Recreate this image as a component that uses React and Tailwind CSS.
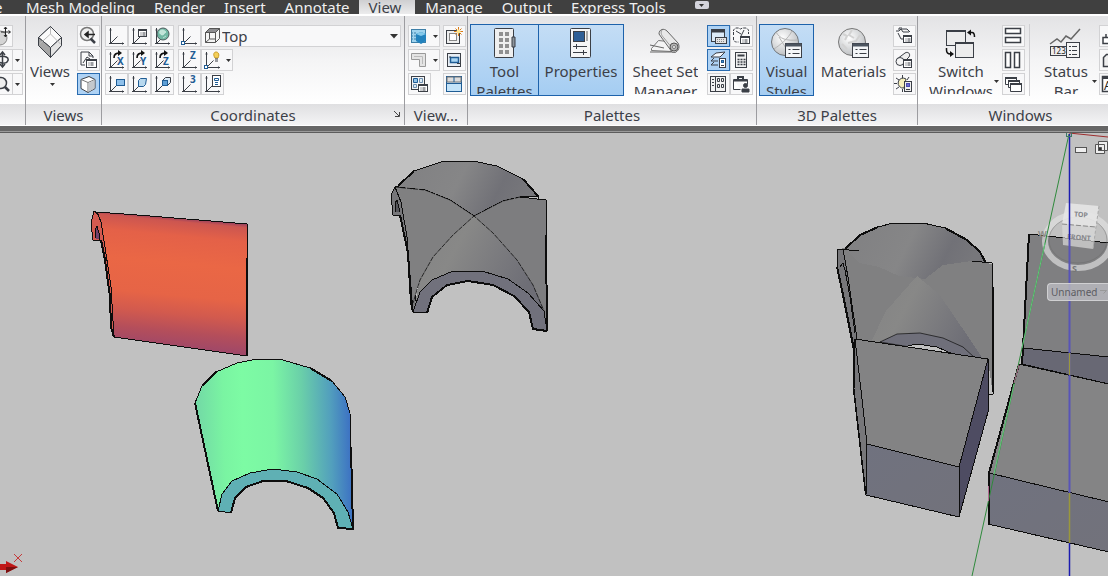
import React, { useState } from 'react';
import clsx from 'clsx';

const tabs = ['Mesh Modeling', 'Render', 'Insert', 'Annotate', 'View', 'Manage', 'Output', 'Express Tools'];

const INK = '#3b3f46';
const BLUE = '#1f5c94';

/* ---------- small icons (20 x 20) ---------- */

const Icon = ({ children }) => (
  <svg width="20" height="20" viewBox="0 0 20 20" fill="none" stroke={INK} className="shrink-0" aria-hidden="true">
    {children}
  </svg>
);

const Axis = ({ children }) => (
  <Icon>
    <path d="M4.500 2v15.500M3 17.500h15M4.500 17.500l7-7" />
    <path d="M3.500 4h2M16.500 16.500v2" />
    {children}
  </Icon>
);

const CurvedArrow = () => (
  <>
    <path d="M8 8c0-4 2-5 6-5" stroke="#111" strokeWidth="1.6" />
    <path d="M12 0l4 3-4 3z" fill="#111" stroke="none" />
  </>
);

const Letter = ({ x = 11, y = 15, children }) => (
  <text x={x} y={y} fontSize="10" fontWeight="bold" fill={BLUE} stroke="none">{children}</text>
);

const MiniList = ({ x, y, w = 9, h = 7 }) => (
  <g>
    <rect x={x} y={y} width={w} height={h} fill="#fff" />
    <path d={`M${x} ${y + 1}h${w}M${x + 2} ${y + 3.5}h1M${x + 4} ${y + 3.5}h3M${x + 2} ${y + 5.500}h1M${x + 4} ${y + 5.500}h3`} />
  </g>
);

const icons = {
  previous: (
    <Icon>
      <circle cx="9" cy="8" r="6.500" fill="#f0f0f0" stroke="#777" strokeWidth="1.500" />
      <path d="M12.500 12.500l4.500 4.500" strokeWidth="2.500" />
      <path d="M17 8.500h-7M10 6l-3 2.500L10 11z" fill="#222" stroke="#222" strokeWidth="1.500" />
    </Icon>
  ),
  named: (
    <Icon>
      <path d="M7 15H3V2h8l4 4v2M11 2v4h4M5 13l4-6 3 2" />
      <MiniList x={8.500} y={9.500} w={10} h={8} />
    </Icon>
  ),
  cube: (
    <Icon>
      <path d="M3 5.500l8-3 6 3v9l-7 4-7-4z" fill="#fff" />
      <path d="M3 5.500l7 3 7-3M10 8.500v10" stroke="#777" />
      <path d="M10.500 9l6-3v8.500l-6 3.500z" fill="#c4c8cc" stroke="none" />
    </Icon>
  ),
  ucs: <Axis />,
  ucsList: <Axis><MiniList x={9.500} y={3.500} w={8} h={7} /></Axis>,
  world: (
    <Axis>
      <circle cx="11" cy="8" r="6" fill="#72b8a4" stroke="#4c5a5c" />
      <path d="M8 5c2-2 4-1 6 1-2 1-2 3-4 3-2-1-3-2-2-4M11 12l3-2" fill="#c0e4d8" stroke="#d8f0e8" strokeWidth=".7" />
    </Axis>
  ),
  origin: <Axis><rect x="2.500" y="15.500" width="3" height="3" fill="#fff" stroke={BLUE} /></Axis>,
  rotX: <Axis><CurvedArrow /><Letter>X</Letter></Axis>,
  rotY: <Axis><CurvedArrow /><Letter>Y</Letter></Axis>,
  rotZ: <Axis><CurvedArrow /><Letter>Z</Letter></Axis>,
  zAxis: <Axis><Letter x={11} y={9}>Z</Letter></Axis>,
  three: <Axis><Letter x={11} y={9}>3</Letter></Axis>,
  view: <Axis><rect x="10.500" y="5.500" width="8" height="6" fill="#8fc0ea" stroke={BLUE} /></Axis>,
  object: <Axis><path d="M9.500 6.500l2-2h6l-1 6-2 2h-5z" fill="#b8d8ee" stroke={BLUE} /></Axis>,
  face: (
    <Axis>
      <path d="M10.500 6.500l3-3h5v5l-3 3h-5z" fill="#d8eaf8" />
      <rect x="10.500" y="6.500" width="5" height="5" fill="#5c9ed6" stroke={BLUE} />
    </Axis>
  ),
  bulb: (
    <Axis>
      <rect x="2.500" y="15.500" width="3" height="3" fill="#fff" stroke={BLUE} />
      <path d="M13 8c-5-8 7-8 3 0z" fill="#f4cf58" stroke="#c89b28" />
      <path d="M13 9h3M13 11h3" />
    </Axis>
  ),
  ucsProps: (
    <Axis>
      <rect x="10.500" y="1.500" width="8" height="11" fill="#fff" />
      <path d="M12.500 4.500h4v2h-4zM13 8.500h3M13 10.500h3" stroke={BLUE} />
    </Axis>
  ),
  newView: (
    <Icon>
      <rect x="2.500" y="4.500" width="13" height="13" fill="#eee" />
      <rect x="5.500" y="7.500" width="7" height="7" fill="#fff" stroke="#888" />
      <path d="M14.500 1v9M10 5.500h9M11.500 2.500l6 6M17.500 2.500l-6 6" stroke="#d97a16" />
      <circle cx="14.500" cy="5.500" r="2" fill="#ffe58a" stroke="none" />
    </Icon>
  ),
  viewports: (
    <Icon>
      <rect x="2.500" y="3.500" width="14" height="13" fill="#9fd3ee" stroke="#3d7fa8" />
      <path d="M2 7h5M2 10h5M2 13h5" stroke="#3d7fa8" strokeDasharray="2 1" />
      <path d="M7 8l5-2 5 2v7l-5 3-5-3z" fill="#2382bd" stroke="none" />
      <path d="M7 8l5 2 5-2-5-2z" fill="#84c9ea" stroke="none" />
    </Icon>
  ),
  polygon: (
    <Icon>
      <path d="M2.500 3.500h14v13h-6v-7h-8z" fill="#e4e4e4" stroke="#999" />
      <path d="M5 6.500h8.500V14" stroke="#bbb" />
    </Icon>
  ),
  clip: (
    <Icon>
      <rect x="3.500" y="3.500" width="13" height="13" fill="#e8eef4" />
      <rect x="6.500" y="7.500" width="8" height="5" fill="#a8d4f2" stroke={BLUE} strokeWidth="1.500" />
      <path d="M5 7h2M13 13.500h3" />
    </Icon>
  ),
  vpNamed: (
    <Icon>
      <rect x="2.500" y="2.500" width="13" height="13" fill="#f3f3f3" />
      <path d="M4.500 4.500h4v4h-4z" fill="#8fc3e8" stroke={BLUE} />
      <path d="M10.500 4.500h3v4h-3zM4.500 10.500h3v3h-3z" fill="#dcebf6" stroke="#6d8fae" />
      <MiniList x={9.500} y={10.500} w={9} h={7} />
    </Icon>
  ),
  join: (
    <Icon>
      <rect x="2.500" y="2.500" width="15" height="15" fill="#c4e3f8" stroke={BLUE} />
      <path d="M3 3h14v5H3z" fill="#ddd" stroke="#777" />
      <path d="M10 3v5M2 9.500h16" stroke={BLUE} />
    </Icon>
  ),
  command: (
    <Icon>
      <rect x="3.500" y="3.500" width="13" height="12" fill="#dcebf8" />
      <path d="M3 5h14" strokeWidth="3" />
      <rect x="7.500" y="11.500" width="11" height="6" fill="#e4e4e4" />
      <path d="M9 13.500h8M9 15.500h8" stroke="#888" strokeDasharray="1 1" />
    </Icon>
  ),
  markup: (
    <Icon>
      <path d="M2.500 9V4l2-2h3l2 1 2-1h4l2 2v4M2.500 11v3l2 2h3" strokeDasharray="3 1" />
      <path d="M5 5l5 3M13 4l-3 6" />
      <MiniList x={9.500} y={10.500} w={9} h={7} />
    </Icon>
  ),
  layers: (
    <Icon>
      <path d="M3 7l5-4 9-1-5 5zM3 11l3-3M3 11h7M3 15l3-3M3 15h7" fill="#f4f8fc" />
      <rect x="11.500" y="8.500" width="6" height="9" fill="#fff" />
      <rect x="13.500" y="10.500" width="2" height="2" fill="#4a90cf" stroke={BLUE} />
      <path d="M13 15.500h3" />
    </Icon>
  ),
  calc: (
    <Icon>
      <rect x="4.500" y="2.500" width="11" height="15" fill="#f2f2f2" />
      <path d="M6.500 5.500h7" strokeWidth="2" />
      <path d="M6.500 9.500h8M6.500 12h8M6.500 14.500h8" strokeWidth="1.500" strokeDasharray="2 1" />
    </Icon>
  ),
  design: (
    <Icon>
      <rect x="2.500" y="2.500" width="15" height="15" fill="#f2f2f2" />
      <path d="M7.500 2v16M4 5.500h2M4 8.500h2M4 11.500h2M9.500 4.500h2v3h-2zM13.500 4.500h2v3h-2zM9.500 10.500h2v3h-2zM13.500 10.500h2v3h-2z" />
    </Icon>
  ),
  reference: (
    <Icon>
      <path d="M2.500 5.500h14v5M2.500 5.500v10h7" fill="#fff" />
      <path d="M7 6V3h5v3" strokeWidth="2" />
      <path d="M3 6.500h13" strokeWidth="2" />
      <circle cx="14.500" cy="11.500" r="2" fill={INK} />
      <path d="M11 18v-3h7v3z" fill={INK} />
    </Icon>
  ),
  light: (
    <Icon>
      <path d="M2 5h3l2-2h6l3 3M4 7l3 6h3M7 3l2 3h6M5 4V2h3" fill="#eee" />
      <MiniList x={9.500} y={9.500} w={8} h={7} />
    </Icon>
  ),
  material: (
    <Icon>
      <path d="M3 9l8-6c3-2 6 1 4 4l-3 3" fill="#eee" />
      <circle cx="6" cy="11.500" r="4" fill="#f4f4f4" />
      <MiniList x={9.500} y={9.500} w={8} h={8} />
    </Icon>
  ),
  sun: (
    <Icon>
      <path d="M8.500 1v3M2 4l3 2M2 15l3-2M8.500 15v3M0 9.500h3M15 3l-2 3" />
      <path d="M12 5a5 5 0 1 0-2 9z" fill="#f6efbb" />
      <rect x="10.500" y="7.500" width="7" height="10" fill="#eee" />
      <rect x="12.500" y="9.500" width="3" height="3" fill="#6a6ad0" stroke="#4a4ab0" />
      <path d="M12 15.500h4" />
    </Icon>
  ),
  tileH: <Icon><path d="M2.500 2.500h15v5h-15zM2.500 11.500h15v5h-15z" fill="#fff" strokeWidth="1.500" /></Icon>,
  tileV: <Icon><path d="M2.500 2.500h5v15h-5zM11.500 2.500h5v15h-5z" fill="#fff" strokeWidth="1.500" /></Icon>,
  cascade: (
    <Icon>
      <path d="M2.500 3.500h11v7h-11z" fill="#fff" />
      <path d="M2 4h12" strokeWidth="2" />
      <path d="M5.500 6.500h11v7h-11z" fill="#fff" />
      <path d="M5 7h12" strokeWidth="2" />
      <path d="M7.500 9.500h11v8h-11z" fill="#fff" />
      <path d="M7 10h12" strokeWidth="2" />
    </Icon>
  ),
  dock: <Icon><path d="M3 11.500h14v6H3zM6 11V8" fill="#fff" strokeWidth="1.500" /></Icon>,
  folder: <Icon><path d="M3.500 16.500v-9l3-3h4v3h7v9z" fill="#eee" strokeWidth="1.500" /></Icon>,
  textWin: (
    <Icon>
      <rect x="2.500" y="2.500" width="16" height="15" fill="#fff" strokeWidth="1.500" />
      <path d="M2 4h16" strokeWidth="2" />
      <text x="4" y="16" fontSize="12" fill="#222" stroke="none">A</text>
    </Icon>
  ),
  orbit: (
    <Icon>
      <path d="M0 6.500c5-1 9 1 8 4s-5 3-8 2" strokeWidth="1.500" />
      <path d="M2.500 2v15M0 5l2.500-3L5 5M0 14l2.500 3L5 14" strokeWidth="1.500" />
    </Icon>
  ),
  pan: (
    <Icon>
      <circle cx="0" cy="12" r="7" fill="#d4d4d4" stroke="#888" />
      <path d="M5.500 1.500v9M1 6h9M4 3l1.500-2L7 3M4 9l1.500 2L7 9M8.500 4.500l2 1.500-2 1.500" stroke="#222" />
    </Icon>
  ),
  zoomIn: (
    <Icon>
      <circle cx="1" cy="9" r="5.500" fill="#eee" strokeWidth="1.500" />
      <path d="M5 13l4 4" strokeWidth="2.500" />
    </Icon>
  ),
};

/* ---------- large icons (40 x 34) ---------- */

const Large = ({ children }) => (
  <svg width="40" height="34" viewBox="0 0 40 34" fill="none" stroke={INK} className="mx-auto shrink-0" aria-hidden="true">
    {children}
  </svg>
);

const ListCard = ({ x, y, w = 17, h = 14 }) => (
  <g>
    <rect x={x} y={y} width={w} height={h} fill="#f4f6f8" />
    <path d={`M${x} ${y + 1.5}h${w}`} strokeWidth="3" stroke="#4c5560" />
    <path d={`M${x + 3} ${y + 6}h2M${x + 7} ${y + 6}h7M${x + 3} ${y + 10}h2M${x + 7} ${y + 10}h7`} />
  </g>
);

const ViewsIcon = () => (
  <Large>
    <path d="M8.500 11.500l12-11 11 11v8l-11 12-12-12z" fill="#f4f4f4" />
    <path d="M8.500 11.500l12 10 11-10-11-11z" fill="#fbfbfb" />
    <path d="M8.500 11.500l12 10v10l-12-12z" fill="#a6a6a6" />
    <path d="M20.500 21.500l11-10v8l-11 12z" fill="#e4e4e4" />
    <path d="M20.500 1v7l-11 10M20.500 8l10 10" stroke="#bbb" />
  </Large>
);

const ToolIcon = () => (
  <Large>
    <rect x="9.500" y="2.500" width="19" height="29" rx="1" fill="#efefef" />
    <path d="M27 11h3v10h-3z" fill="#8d949b" />
    <path d="M14 6h4v4h-4zM20 6h4v4h-4zM14 12h4v4h-4zM20 12h4v4h-4zM14 18h4v4h-4zM20 18h4v4h-4zM14 24h4v4h-4zM20 24h4v4h-4z" fill="#909090" stroke="none" />
  </Large>
);

const PropertiesIcon = () => (
  <Large>
    <rect x="9.500" y="2.500" width="20" height="29" rx="1" fill="#f6f6f6" />
    <rect x="12.500" y="5.500" width="11" height="10" fill="#2f5f96" />
    <path d="M26 5v10" stroke="#aaa" strokeWidth="2" />
    <path d="M12 20.500h14M12 26.500h14M15.500 18v5M22.500 24v5" />
  </Large>
);

const SheetIcon = () => (
  <Large>
    <path d="M5.500 22.500l7-8 18 2-5 9-20-1z" fill="#f4f4f4" stroke="#777" />
    <path d="M4 19l14 3M4 26h26" stroke="#666" />
    <path d="M13 8c0-5 5-6 8-3l11 12c3 5-1 11-6 9z" fill="#e8e8e8" stroke="#666" />
    <path d="M16 4c-2 3 0 6 2 8l8 10" stroke="#999" />
    <circle cx="28" cy="21" r="4" fill="#b4b4b4" stroke="#555" />
    <circle cx="28" cy="21" r="1.500" fill="#fff" stroke="#777" />
  </Large>
);

const VisualIcon = () => (
  <Large>
    <circle cx="18" cy="16" r="13.500" fill="url(#ball)" stroke="#6f757b" />
    <path d="M9 6c4 7 10 9 22 8M7 23c6-4 14-10 18-18M12 11l10 16" stroke="#b4b4b4" />
    <ListCard x={18.500} y={17.500} w={16} />
  </Large>
);

const MaterialsIcon = () => (
  <Large>
    <circle cx="18" cy="16" r="13.500" fill="url(#ball)" stroke="#777" />
    <path d="M9 8l4 2-2 4M18 4l-3 5 5 3M26 9l-4 6-8 2M8 18l5 5" stroke="#d2d2d2" strokeWidth="2" />
    <ListCard x={18.500} y={17.500} w={16} />
  </Large>
);

const SwitchIcon = () => (
  <Large>
    <rect x="5.500" y="4.500" width="19" height="15" fill="#ececec" />
    <path d="M5 5h20" strokeWidth="2" />
    <rect x="14.500" y="16.500" width="18" height="15" fill="#ececec" />
    <path d="M14 17h19" strokeWidth="2" />
    <path d="M29 6.500h2q2.500 0 2.500 4.500M5.500 22v2q0 4 4 4" stroke="#111" strokeWidth="1.500" />
    <path d="M30 3.500v6l-4-3zM9 25v6l4-3z" fill="#111" stroke="none" />
  </Large>
);

const StatusIcon = () => (
  <Large>
    <path d="M4 18l7-5 4 3 5-6 5 3 9-10" stroke="#666" strokeWidth="1.500" />
    <rect x="4.500" y="20.500" width="16" height="9" fill="#eee" />
    <text x="6" y="28" fontSize="8" fill="#222" stroke="none">123</text>
    <rect x="20.500" y="16.500" width="13" height="15" fill="#f5f5f5" />
    <path d="M23 20.500h2M26 20.500h5M23 24.500h2M26 24.500h5M23 28.500h2M26 28.500h5" />
  </Large>
);

/* ---------- ribbon parts ---------- */

const Caret = ({ className }) => (
  <svg width="5" height="3" viewBox="0 0 5 3" className={className} aria-hidden="true">
    <path d="M0 0h5L2.500 3z" fill="#333" />
  </svg>
);

const SmallButton = ({ icon, active, menu }) => (
  <button
    type="button"
    aria-label={icon}
    className={clsx(
      'flex h-[22px] items-center overflow-hidden border',
      menu ? 'w-8' : 'w-[23px]',
      active ? 'border-[#2a6cb0] bg-[#aed2f4]' : 'border-[#d2d2d4] bg-[#f8f8f9]'
    )}
  >
    {icons[icon]}
    {menu && <Caret className="ml-1 shrink-0" />}
  </button>
);

/* buttons whose left half runs off the window edge */
const EdgeButton = ({ icon, menu }) => (
  <button
    type="button"
    aria-label={icon}
    className={clsx(
      'flex h-[22px] items-center border border-l-0 border-[#d2d2d4] bg-[#f8f8f9]',
      menu ? 'w-[23px]' : 'w-[13px]'
    )}
  >
    <span className="w-3 shrink-0 overflow-hidden">{icons[icon]}</span>
    {menu && (
      <span className="flex h-full items-center border-l border-[#d2d2d4] pl-0.5">
        <Caret />
      </span>
    )}
  </button>
);

const SmallGrid = ({ columns = 'grid-cols-1', children }) => (
  <div className={clsx('mt-px grid content-start justify-items-start gap-y-0.5', columns)}>{children}</div>
);

const BigButton = ({ icon, lines, active, menu, className }) => (
  <button
    type="button"
    className={clsx(
      'relative flex h-[72px] flex-col items-center border pt-px',
      active ? 'border-[#1d62ab] bg-gradient-to-b from-[#c4ddf5] to-[#a5cdf2]' : 'border-transparent',
      className
    )}
  >
    {icon}
    <span className="mt-px block h-[33px] overflow-hidden leading-5 whitespace-nowrap">
      {lines.map((line) => (
        <span key={line} className="block">{line}</span>
      ))}
    </span>
    {menu && <Caret className="absolute right-0 bottom-3" />}
  </button>
);

const Panel = ({ title, className, children }) => (
  <section className={clsx('flex shrink-0 flex-col border-r border-[#9c9ca0]', className)}>
    <div className="flex h-[88px] overflow-hidden bg-gradient-to-b from-[#e3e3e5] via-[#f4f4f5] to-white pt-2">
      {children}
    </div>
    <h2 className="relative h-[21px] bg-gradient-to-b from-[#dfdfe1] to-[#f4f4f5] text-center leading-[22px] whitespace-nowrap">
      {title}
      {title === 'Coordinates' && (
        <svg width="6" height="6" viewBox="0 0 6 6" fill="none" stroke="#444" className="absolute right-1 bottom-2" aria-hidden="true">
          <path d="M0 0l5 5M5.500 1v4.500H1" />
        </svg>
      )}
    </h2>
  </section>
);

/* ---------- drawing area ---------- */

const Scene = () => (
  <svg className="block h-full w-full" viewBox="0 133 1108 443" preserveAspectRatio="xMinYMin slice" fill="none" aria-hidden="true">
    <defs>
      <radialGradient id="ball" cx=".4" cy=".35" r=".7">
        <stop offset="0" stopColor="#fff" />
        <stop offset="1" stopColor="#b9bcbf" />
      </radialGradient>
      <linearGradient id="red" gradientUnits="userSpaceOnUse" x1="172" y1="217" x2="160" y2="346">
        <stop offset="0" stopColor="#96405f" />
        <stop offset=".03" stopColor="#cc5650" />
        <stop offset=".14" stopColor="#e46148" />
        <stop offset=".35" stopColor="#ea6745" />
        <stop offset=".6" stopColor="#e66446" />
        <stop offset=".74" stopColor="#d25a4e" />
        <stop offset=".88" stopColor="#b44e5b" />
        <stop offset="1" stopColor="#a04868" />
      </linearGradient>
      <linearGradient id="green" gradientUnits="userSpaceOnUse" x1="196" y1="440" x2="353" y2="436">
        <stop offset="0" stopColor="#72d8a6" />
        <stop offset=".18" stopColor="#7af4a2" />
        <stop offset=".3" stopColor="#7dfba4" />
        <stop offset=".5" stopColor="#7bf5a4" />
        <stop offset=".68" stopColor="#6acfa9" />
        <stop offset=".86" stopColor="#529fbd" />
        <stop offset="1" stopColor="#3a6cc4" />
      </linearGradient>
      <linearGradient id="arch" x1="0" x2="1" y1="0" y2=".2">
        <stop offset="0" stopColor="#808082" />
        <stop offset=".5" stopColor="#868687" />
        <stop offset=".8" stopColor="#717177" />
        <stop offset="1" stopColor="#77777b" />
      </linearGradient>
      <linearGradient id="bay" x1="0" x2="1" y1="0" y2=".4">
        <stop offset="0" stopColor="#838384" />
        <stop offset=".4" stopColor="#888887" />
        <stop offset="1" stopColor="#6e6e76" />
      </linearGradient>
      <linearGradient id="front" x1="0" x2="1" y1="0" y2="1">
        <stop offset="0" stopColor="#70727f" />
        <stop offset="1" stopColor="#72727b" />
      </linearGradient>
    </defs>

    <g stroke="#0d0d0d" strokeLinejoin="round" shapeRendering="crispEdges">
      {/* red barrel */}
      <path d="M94 211l-3 12 2 17h8l4 20 5 37 1 30 3 10 2-8-8-75-6-37z" fill="#d25a50" />
      <path d="M95 238v-8l2-4 2 7 1 7" fill="#70406c" />
      <path d="M97 212l53 4 97 8v132l-133-19-3-50-6-40-4-25z" fill="url(#red)" />
      <path d="M247 258v98M101 240l4 20 5 37 1 30 3 10" strokeWidth="2" />

      {/* green barrel */}
      <path d="M195 403l7-17 14-14 21-9 20-4 26 1 27 8 22 13 13 16 5 16 1 34 2 82-5-17-11-18-20-15-20-7-24-3-23 4-18 8-10 13-4 17z" fill="url(#green)" />
      <path d="M218 511l4-17 10-13 18-8 23-4 24 3 20 7 20 15 11 18 5 17-15-1-4-15-11-15-15-10-22-7h-23l-17 6-11 11-4 15z" fill="#5fb0b4" />
      <path d="M195 403l23 108M202 386l14-14M310 368l22 13M351 447l2 82-15-1-4-15-11-15-15-10-22-7h-23l-17 6-11 11-4 15" strokeWidth="2" />

      {/* groin vault */}
      <path d="M398 186l16-15 27-9 32-1 24 5 26 13 15 17-18 1-17 4-29 15-24-16-25-10-30-3z" fill="url(#arch)" />
      <path d="M395 187l-4 8 2 20h7l8 38 3 49 2 10 3-10-8-67-6-33z" fill="#77777a" />
      <path d="M395 212v-9l2-3 3 12" fill="#55555a" />
      <path d="M395 187l30 3 25 10 24 16-21 19-20 22-13 23-7 23-6-70-6-31z" fill="#808081" stroke="none" />
      <path d="M520 197l26 3 1 131-3-20-11-26-16-25-24-27-19-17 29-15z" fill="#7d7d7f" stroke="none" />
      <path d="M474 216l19 17 24 27 16 25 11 26-16-18-20-14-26-8h-29l-21 9-12 12-7 20 7-32 13-23 20-22z" fill="url(#bay)" stroke="none" />
      <path d="M413 312l7-20 12-12 21-9h29l26 8 20 14 16 18 3 20-14-2-4-17-15-16-21-11-25-4-21 4-15 12-5 16z" fill="#71717c" />
      <path d="M395 187l6 15 6 35 6 75M538 196v3M520 197l26 3 1 131" />
      <path d="M395 187l30 3 25 10 24 16 19 17 24 27 16 25 11 26M520 197l-17 4-29 15-21 19-20 22-13 23-7 23" strokeDasharray="5 1" strokeWidth=".8" />
      <path d="M398 186l16-15M523 179l15 17M546 235l1 96M400 215l8 38 3 49 2 10M427 313l5-16 15-12 21-4 25 4 21 11 15 16 4 17 14 2" strokeWidth="2" />

      {/* vault standing on a block */}
      <path d="M838 249l7-1 15-13 18-8 15-4h30l22 5 22 12 13 12 6 11 6 1 1 131-5-35-133-20z" fill="#808081" stroke="none" />
      <path d="M845 249l15-14 18-8 15-4h30l22 5 22 12 13 12 6 11" />
      <path d="M846 249l14-13 18-8 15-4h30l22 5 22 12 13 12 5 9-13-1-29 4-18 14-26-3-20-9-20-4z" fill="url(#arch)" stroke="none" />
      <path d="M838 249l-1 18 5 23 12 60 3-11-9-62-5-28z" fill="#77777a" />
      <path d="M840 267l3-4 2 7 5 27 5 36" />
      <path d="M917 276l22 18 30 44 14 21-112-17 15-31z" fill="url(#bay)" stroke="none" />
      <path d="M880 342l17-8 23-1 23 5 20 9 12 11z" fill="#6f6f7a" strokeWidth=".7" />
      <path d="M903 347l14-3 20 3 18 8z" fill="#c1c1c1" />
      <path d="M838 249l21 2M972 261l20 2 1 24v107h-4" />
      <path d="M845 249l15-14 18-8M945 228l22 12 13 12 6 11M837 267l5 23 12 60v40l12 105M993 287v105" strokeWidth="2" />
      <path d="M855 339l-1 50 12 106 1-51-6-54z" fill="#77777a" />
      <path d="M855 339l133 20-29 108-92-23-6-54z" fill="#838384" />
      <path d="M867 444l92 23v50l-93-22z" fill="url(#front)" />
      <path d="M988 359v53l-29 105v-50z" fill="#4e4c62" />

      {/* blocks on the right */}
      <path d="M1029 234l80 9v114l-86-9z" fill="#7f7f81" />
      <path d="M1023 348l86 9v27l-87-20z" fill="#686874" />
      <path d="M1019 364l90 20v118l-120-29z" fill="#848485" />
      <path d="M989 473l120 29v50l-121-28z" fill="url(#front)" />
      <path d="M1029 234l-6 114-1 16M1019 364l-30 109v51" strokeWidth="2" />
    </g>

    {/* view cube */}
    <g>
      <ellipse cx="1078" cy="241" rx="33" ry="27" stroke="#e3e3e3" strokeOpacity=".65" strokeWidth="6" />
      <ellipse cx="1078" cy="240" rx="29" ry="23" stroke="#666" strokeOpacity=".4" />
      <path d="M1066 203l33 3-3 21-34-3z" fill="#e6e6e6" fillOpacity=".9" />
      <path d="M1062 224l34 3-3 22-30-4z" fill="#dadada" fillOpacity=".7" />
      <path d="M1062 224l34 3" stroke="#888" strokeDasharray="5 2" />
      <path d="M1099 206l-3 21-3 22" stroke="#aaa" strokeDasharray="3 2" />
      <g fontFamily="Noto Sans, sans-serif" fontWeight="bold" fill="#84858a">
        <text x="1074" y="217" fontSize="7" transform="rotate(4 1080 215)">TOP</text>
        <text x="1067" y="240" fontSize="7" transform="rotate(4 1080 239)">FRONT</text>
        <text x="1038" y="237" fontSize="9" fill="#8c8c88">W</text>
        <text x="1072" y="272" fontSize="9" fill="#777">S</text>
      </g>
    </g>

    {/* axes */}
    <g>
      <path d="M1069 133l39 4" stroke="#9c2c2c" />
      <path d="M1069 134L972 576" stroke="#2f8a3c" />
      <path d="M1045 243l-23 105M1014 384l-20 90" stroke="#66c47c" />
      <path d="M1019 365l-5 18M988.500 486v15" stroke="#b06a90" />
      <path d="M1069.500 134v106M1069.500 543v33" stroke="#1c1cb0" strokeWidth="1.500" />
      <path d="M1069.500 240v253" stroke="#5854b8" strokeWidth="2" />
      <path d="M1069.500 353v22M1069.500 493v50" stroke="#9a983c" strokeWidth="1.500" />
      <rect x="1066.500" y="131.500" width="5" height="5" stroke="#3d7a66" />
    </g>

    {/* ucs marker */}
    <path d="M0 564h6v-3l12 6-12 6v-3H0z" fill="#c01818" />
    <path d="M6 567h12l-12 6z" fill="#7c1010" />
    <path d="M14 554l8 8M22 554l-8 8" stroke="#c63a3a" />
  </svg>
);

const App = () => {
  const [activeTab, setActiveTab] = useState('View');
  const [ucsView, setUcsView] = useState('Top');

  return (
    <div className="flex h-screen flex-col overflow-hidden bg-[#c1c1c1] font-['Noto_Sans',sans-serif] text-[15px] text-[#3c3f48]">
      {/* Tabs */}
      <nav className="flex h-3.5 shrink-0 overflow-hidden bg-[#404040] leading-3 whitespace-nowrap text-[#f0f0f0]">
        <button type="button" className="w-4 overflow-hidden text-left -indent-1.5">e</button>
        {tabs.map((tab) => (
          <button
            key={tab}
            type="button"
            onClick={() => setActiveTab(tab)}
            className={clsx(
              'pl-2.5',
              tab === activeTab ? 'bg-gradient-to-b from-[#cfcfd1] to-[#ececed] pr-3.5 text-[#3c3f48]' : 'pr-[9px]'
            )}
          >
            {tab}
          </button>
        ))}
        <button type="button" aria-label="Minimize ribbon" className="mt-px ml-5 flex h-2 w-3.5 items-center justify-center rounded-xs bg-[#d4d4dc]">
          <Caret />
        </button>
      </nav>

      {/* Ribbon */}
      <div className="flex h-28 shrink-0 overflow-hidden border-t-2 border-b border-white bg-white">
        <Panel title="" className="w-[26px]">
          <SmallGrid>
            <EdgeButton icon="pan" />
            <EdgeButton icon="orbit" menu />
            <EdgeButton icon="zoomIn" menu />
          </SmallGrid>
        </Panel>

        <Panel title="Views" className="w-[76px]">
          <BigButton icon={<ViewsIcon />} lines={['Views']} className="w-12" />
          <Caret className="-ml-6 mt-[59px] shrink-0" />
          <div className="ml-[22px]">
            <SmallGrid>
              <SmallButton icon="previous" />
              <SmallButton icon="named" />
              <SmallButton icon="cube" active />
            </SmallGrid>
          </div>
        </Panel>

        <Panel title="Coordinates" className="w-[303px]">
          <div className="flex w-full gap-1 px-[3px]">
            <SmallGrid columns="grid-cols-3">
              <SmallButton icon="ucs" />
              <SmallButton icon="ucsList" />
              <SmallButton icon="world" />
              <SmallButton icon="rotX" />
              <SmallButton icon="rotY" />
              <SmallButton icon="rotZ" />
              <SmallButton icon="view" />
              <SmallButton icon="object" />
              <SmallButton icon="face" />
            </SmallGrid>
            <SmallGrid>
              <SmallButton icon="origin" />
              <SmallButton icon="zAxis" />
              <SmallButton icon="three" />
            </SmallGrid>
            <div className="-ml-1 mt-px flex flex-1 flex-col gap-0.5">
              <label className="relative flex h-[22px] items-center border border-[#d2d2d4] bg-[#f8f8f9]">
                <svg width="20" height="20" viewBox="0 0 20 20" fill="none" stroke="#555" className="shrink-0" aria-hidden="true">
                  <path d="M3.500 6.500l4-4h10v10l-4 4h-10z" fill="#f4f4f4" />
                  <path d="M3.500 6.500l4-4h10l-4 4z" fill="#8d8d90" />
                  <path d="M13.500 6.500v10M3.500 6.500h10M7.500 7v6h6M7.500 13l-4 3.500" />
                </svg>
                <select
                  aria-label="UCS view"
                  value={ucsView}
                  onChange={(e) => setUcsView(e.target.value)}
                  className="h-full w-full appearance-none leading-5 outline-none"
                >
                  <option>Top</option>
                  <option>Front</option>
                </select>
                <svg width="8" height="5" viewBox="0 0 8 5" className="pointer-events-none absolute right-0.5" aria-hidden="true">
                  <path d="M0 0h8L4 4.500z" fill="#333" />
                </svg>
              </label>
              <SmallButton icon="bulb" menu />
              <SmallButton icon="ucsProps" />
            </div>
          </div>
        </Panel>

        <Panel title="View..." className="w-[63px]">
          <div className="ml-[3px] flex gap-[3px]">
            <SmallGrid>
              <SmallButton icon="viewports" menu />
              <SmallButton icon="polygon" menu />
              <SmallButton icon="vpNamed" />
            </SmallGrid>
            <SmallGrid>
              <SmallButton icon="newView" />
              <SmallButton icon="clip" />
              <SmallButton icon="join" />
            </SmallGrid>
          </div>
        </Panel>

        <Panel title="Palettes" className="w-[289px]">
          <BigButton icon={<ToolIcon />} lines={['Tool', 'Palettes']} active className="ml-0.5 w-[69px]" />
          <BigButton icon={<PropertiesIcon />} lines={['Properties']} active className="-ml-px w-[86px]" />
          <BigButton icon={<SheetIcon />} lines={['Sheet Set', 'Manager']} className="w-[83px]" />
          <SmallGrid columns="grid-cols-2">
            <SmallButton icon="command" active />
            <SmallButton icon="markup" />
            <SmallButton icon="layers" active />
            <SmallButton icon="calc" />
            <SmallButton icon="design" />
            <SmallButton icon="reference" />
          </SmallGrid>
        </Panel>

        <Panel title="3D Palettes" className="w-[161px]">
          <BigButton icon={<VisualIcon />} lines={['Visual', 'Styles']} active className="ml-0.5 w-[55px]" />
          <BigButton icon={<MaterialsIcon />} lines={['Materials']} className="w-[79px]" />
          <SmallGrid>
            <SmallButton icon="light" />
            <SmallButton icon="material" />
            <SmallButton icon="sun" />
          </SmallGrid>
        </Panel>

        <Panel title="Windows" className="-mr-4 grow">
          <BigButton icon={<SwitchIcon />} lines={['Switch', 'Windows']} menu className="ml-1 w-[78px]" />
          <div className="ml-0.5 flex">
            <SmallGrid>
              <SmallButton icon="tileH" />
              <SmallButton icon="tileV" />
              <SmallButton icon="cascade" />
            </SmallGrid>
          </div>
          <div className="ml-1 h-[72px] w-px shrink-0 bg-[#cfcfd2]" />
          <BigButton icon={<StatusIcon />} lines={['Status', 'Bar']} menu className="ml-1 w-[64px]" />
          <div className="ml-px">
            <SmallGrid>
              <SmallButton icon="dock" />
              <SmallButton icon="folder" />
              <SmallButton icon="textWin" />
            </SmallGrid>
          </div>
        </Panel>
      </div>
      <div className="h-[7px] shrink-0 border-b border-[#5c5c5c] bg-[#9a9a9a]">
        <div className="h-[5px] bg-[#666]" />
      </div>

      {/* Drawing area */}
      <main className="relative min-h-0 flex-1">
        <Scene />
        <div className="absolute top-2 right-0 flex items-center gap-2">
          <button type="button" aria-label="Minimize" className="mt-1 h-1.5 w-3 border border-[#555] bg-[#eee]" />
          <button type="button" aria-label="Restore" className="w-[13px]">
            <svg width="13" height="13" viewBox="0 0 13 13" fill="#eee" stroke="#555">
              <path d="M3.500.5h9v9h-9zM.5 3.500h9v9h-9z" />
              <path d="M3.500 6.500h3v3h-3z" fill="#333" />
            </svg>
          </button>
        </div>
        <button
          type="button"
          className="absolute top-[150px] right-0 flex h-[18px] w-[61px] items-center justify-between rounded-l-sm border border-r-0 border-[#d0d0d2] bg-[#bcbcc0]/80 pr-px pl-[3px] text-[10px] text-[#5c5c62]"
        >
          Unnamed
          <svg width="7" height="4" viewBox="0 0 7 4" fill="none" stroke="#999" aria-hidden="true">
            <path d="M0 .5h6.500L3.500 3.500" />
          </svg>
        </button>
      </main>
    </div>
  );
};

export default App;
